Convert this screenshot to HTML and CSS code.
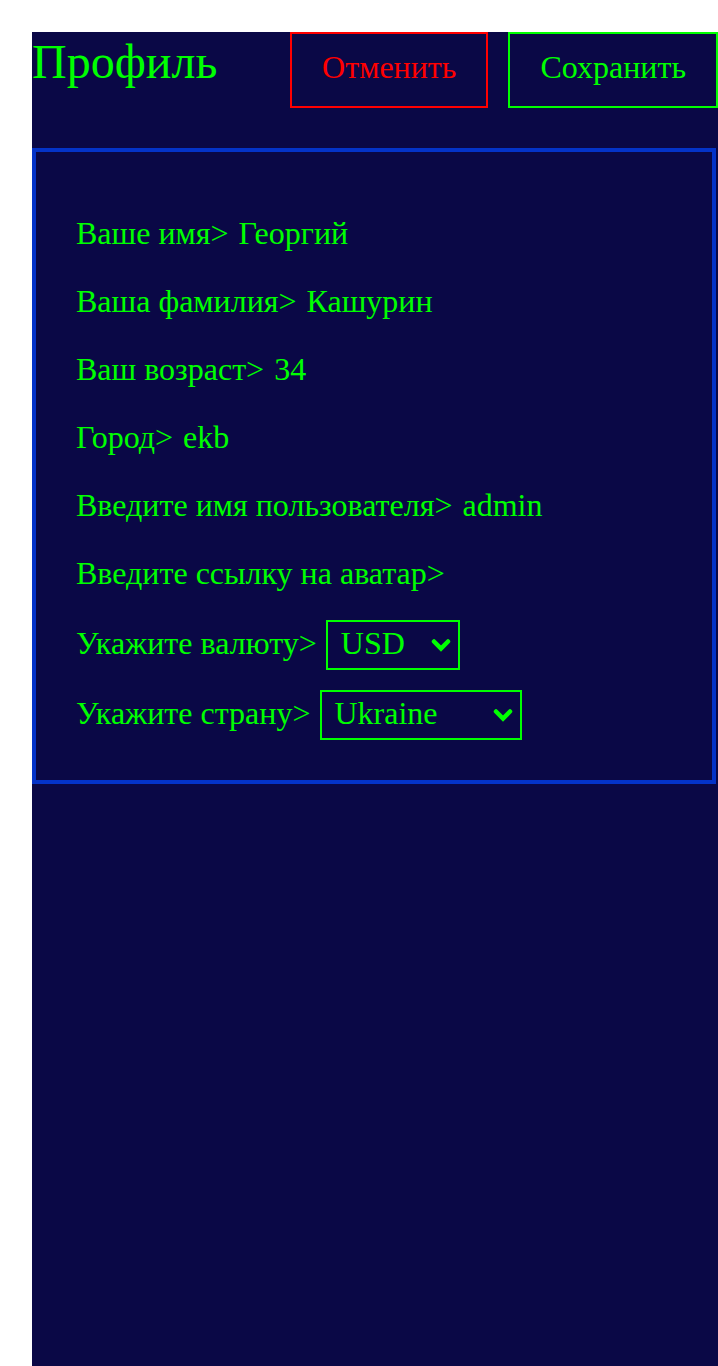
FILE: index.html
```html
<!DOCTYPE html>
<html lang="ru">
<head>
<meta charset="utf-8">
<title>Профиль</title>
<link rel="stylesheet" href="styles.css">
</head>
<body>
<div class="page">
  <div class="panel">
    <header class="header">
      <h1 class="title">Профиль</h1>
      <div class="actions">
        <button class="btn btn-cancel" type="button">Отменить</button>
        <button class="btn btn-save" type="button">Сохранить</button>
      </div>
    </header>
    <section class="card">
      <div class="field"><span class="label">Ваше имя&gt;</span> <span class="value">Георгий</span></div>
      <div class="field"><span class="label">Ваша фамилия&gt;</span> <span class="value">Кашурин</span></div>
      <div class="field"><span class="label">Ваш возраст&gt;</span> <span class="value">34</span></div>
      <div class="field"><span class="label">Город&gt;</span> <span class="value">ekb</span></div>
      <div class="field"><span class="label">Введите имя пользователя&gt;</span> <span class="value">admin</span></div>
      <div class="field field-before-select"><span class="label">Введите ссылку на аватар&gt;</span></div>
      <div class="field-select field-select-first">
        <span class="label">Укажите валюту&gt;</span>
        <span class="select-wrap">
          <select class="select select-currency">
            <option>USD</option>
            <option>EUR</option>
            <option>RUB</option>
          </select>
          <svg class="chevron" width="20" height="14" viewBox="0 0 20 14" aria-hidden="true"><path d="M3 3.5 L10 10.5 L17 3.5" fill="none" stroke="#00ff00" stroke-width="4.5" stroke-linecap="round" stroke-linejoin="miter"/></svg>
        </span>
      </div>
      <div class="field-select">
        <span class="label">Укажите страну&gt;</span>
        <span class="select-wrap">
          <select class="select select-country">
            <option>Ukraine</option>
            <option>Russia</option>
            <option>Belarus</option>
          </select>
          <svg class="chevron" width="20" height="14" viewBox="0 0 20 14" aria-hidden="true"><path d="M3 3.5 L10 10.5 L17 3.5" fill="none" stroke="#00ff00" stroke-width="4.5" stroke-linecap="round" stroke-linejoin="miter"/></svg>
        </span>
      </div>
    </section>
  </div>
</div>
</body>
</html>
```

FILE: styles.css
```css
html, body {
  margin: 0;
  padding: 0;
  background: #ffffff;
}

body {
  font-family: "Liberation Serif", "Times New Roman", serif;
  color: #00ff00;
}

.page {
  padding: 32px 0 0 32px;
}

.panel {
  background: #0a0846;
  min-height: 1334px;
  width: 686px;
  display: flex;
  flex-direction: column;
}

.header {
  display: flex;
  justify-content: space-between;
  align-items: baseline;
}

.title {
  margin: 0;
  font-size: 48px;
  font-weight: normal;
  color: #00ff00;
}

.actions {
  display: flex;
  gap: 20px;
  align-items: baseline;
}

.btn {
  font-family: "Liberation Serif", "Times New Roman", serif;
  font-size: 32px;
  line-height: 36px;
  background: transparent;
  padding: 15px 30px 21px;
  margin: 0;
  cursor: pointer;
}

.btn-cancel {
  border: 2px solid #ff0000;
  color: #ff0000;
}

.btn-save {
  border: 2px solid #00ff00;
  color: #00ff00;
}

.card {
  margin: 40px 2px 0 0;
  border: 4px solid #0433c8;
  padding: 63px 40px 40px 40px;
  display: flex;
  flex-direction: column;
  font-size: 32px;
}

.field {
  margin-bottom: 31px;
  line-height: normal;
}

.value {
  margin-left: 2px;
}

.field-before-select {
  margin-bottom: 28px;
}

.field-select {
  display: flex;
  align-items: baseline;
  gap: 10px;
}

.field-select-first {
  margin-bottom: 20px;
  gap: 9px;
}

.select-wrap {
  position: relative;
  display: inline-flex;
}

.select {
  -webkit-appearance: none;
  appearance: none;
  font-family: "Liberation Serif", "Times New Roman", serif;
  font-size: 32px;
  color: #00ff00;
  background: transparent;
  border: 2px solid #00ff00;
  border-radius: 0;
  height: 50px;
  padding: 0 8px 5px 13px;
  margin: 0;
  outline: none;
}

.select option {
  background: #0a0846;
  color: #00ff00;
}

.select-currency {
  width: 134px;
}

.select-country {
  width: 202px;
  padding-left: 12px;
}

.chevron {
  position: absolute;
  right: 9px;
  top: 18px;
  pointer-events: none;
}
```
